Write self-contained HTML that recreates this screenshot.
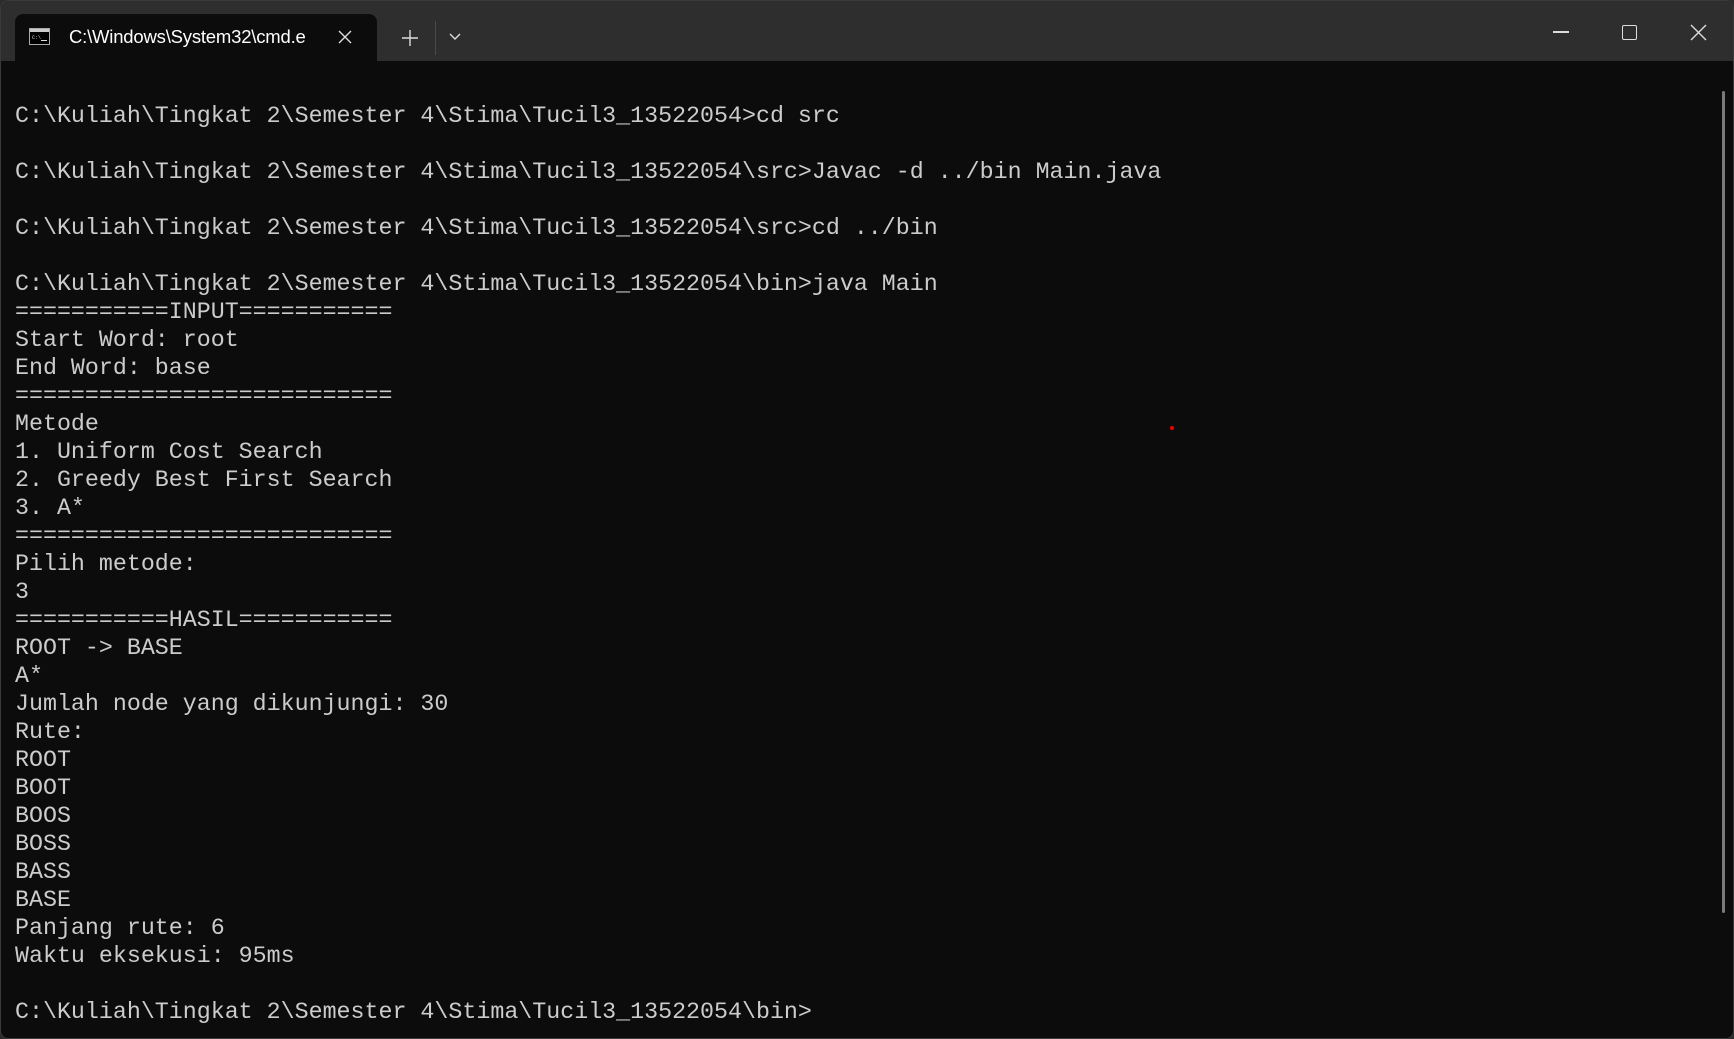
<!DOCTYPE html>
<html><head><meta charset="utf-8"><style>
html,body{margin:0;padding:0;width:1734px;height:1039px;overflow:hidden;background:#2b2b2b}
.win{position:absolute;left:0;top:0;width:1732px;height:1037px;border:1px solid #3a3a3a;border-radius:8px;background:#0c0c0c;overflow:hidden}
.bar{position:absolute;left:0;top:0;width:100%;height:60px;background:#2e2e2e}
.tab{position:absolute;left:14px;top:13px;width:362px;height:48px;background:#0c0c0c;border-radius:8px 8px 0 0}
.tab .t{position:absolute;left:54px;top:12px;font:18.5px "Liberation Sans",sans-serif;color:#fff;letter-spacing:-0.2px}
.term{position:absolute;left:14px;top:101px;font:23.3px/28px "Liberation Mono",monospace;color:#cccccc;white-space:pre}
.sb{position:absolute;left:1721px;top:90px;width:3px;height:822px;background:#7a7a7a;border-radius:2px}
</style></head><body><div class="win">
<div class="bar">
<div class="tab">
<svg style="position:absolute;left:14px;top:14px" width="21" height="17"><rect x="0.5" y="0.5" width="20" height="16" fill="#000" stroke="#aaa"/><rect x="1" y="1" width="19" height="3" fill="#ccc"/><text x="3" y="11" font-size="5" fill="#ddd" font-family="Liberation Mono">C:\</text><rect x="12" y="12" width="6" height="1" fill="#ddd"/></svg>
<div class="t">C:\Windows\System32\cmd.e</div>
<svg style="position:absolute;left:323px;top:16px" width="14" height="14"><path d="M1 1L13 13M13 1L1 13" stroke="#ddd" stroke-width="1.4"/></svg>
</div>
<svg style="position:absolute;left:400px;top:28px" width="18" height="18"><path d="M9 1V17M1 9H17" stroke="#ddd" stroke-width="1.4"/></svg>
<div style="position:absolute;left:434px;top:20px;width:1px;height:34px;background:#4a4a4a"></div>
<svg style="position:absolute;left:448px;top:32px" width="12" height="8"><path d="M1 1L6 6L11 1" stroke="#ddd" stroke-width="1.4" fill="none"/></svg>
<div style="position:absolute;left:1552px;top:30px;width:16px;height:1.5px;background:#ddd"></div>
<div style="position:absolute;left:1621px;top:24px;width:13px;height:13px;border:1.4px solid #ddd;border-radius:2px"></div>
<svg style="position:absolute;left:1689px;top:23px" width="17" height="17"><path d="M1 1L16 16M16 1L1 16" stroke="#ddd" stroke-width="1.4"/></svg>
</div>
<div class="sb"></div>
<div style="position:absolute;left:1169px;top:425px;width:4px;height:4px;border-radius:2px;background:#e00"></div>
<div class="term">C:\Kuliah\Tingkat 2\Semester 4\Stima\Tucil3_13522054>cd src

C:\Kuliah\Tingkat 2\Semester 4\Stima\Tucil3_13522054\src>Javac -d ../bin Main.java

C:\Kuliah\Tingkat 2\Semester 4\Stima\Tucil3_13522054\src>cd ../bin

C:\Kuliah\Tingkat 2\Semester 4\Stima\Tucil3_13522054\bin>java Main
===========INPUT===========
Start Word: root
End Word: base
===========================
Metode
1. Uniform Cost Search
2. Greedy Best First Search
3. A*
===========================
Pilih metode:
3
===========HASIL===========
ROOT -> BASE
A*
Jumlah node yang dikunjungi: 30
Rute:
ROOT
BOOT
BOOS
BOSS
BASS
BASE
Panjang rute: 6
Waktu eksekusi: 95ms

C:\Kuliah\Tingkat 2\Semester 4\Stima\Tucil3_13522054\bin></div>
</div></body></html>
